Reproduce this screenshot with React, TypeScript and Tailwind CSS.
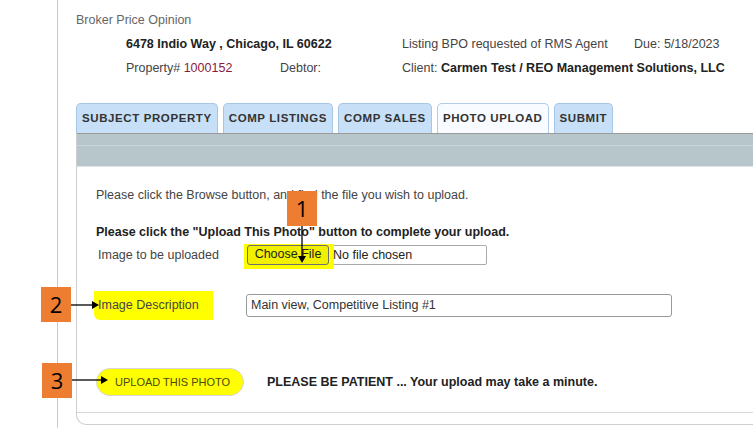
import React from 'react';

const tabs = [
  { label: 'SUBJECT PROPERTY', active: false },
  { label: 'COMP LISTINGS', active: false },
  { label: 'COMP SALES', active: false },
  { label: 'PHOTO UPLOAD', active: true },
  { label: 'SUBMIT', active: false },
];

const Callout: React.FC<{ n: string; className: string }> = ({ n, className }) => (
  <div
    className={`absolute w-[30px] h-[35px] bg-[#ed7d31] flex items-center justify-center text-[22px] text-black ${className}`}
    style={{ fontFamily: '"Open Sans", "Liberation Sans", sans-serif' }}
  >
    {n}
  </div>
);

const App: React.FC = () => {
  return (
    <div
      className="relative w-[753px] h-[428px] overflow-hidden bg-white text-[12.5px] text-[#444]"
      style={{ fontFamily: '"Liberation Sans", Arial, sans-serif' }}
    >
      <div className="ml-[57px] h-[428px] border-l border-[#c8c8c8] pl-[18px] pt-[8px] flex flex-col">
        {/* header */}
        <div className="h-[24px] flex items-center text-[#666]">Broker Price Opinion</div>
        <div className="h-[24px] flex items-center">
          <div className="w-[326px] pl-[50px] font-bold text-[#222]">6478 Indio Way , Chicago, IL 60622</div>
          <div className="w-[232px]">Listing BPO requested of RMS Agent</div>
          <div>Due: 5/18/2023</div>
        </div>
        <div className="h-[24px] flex items-center">
          <div className="w-[204px] pl-[50px]">
            Property# <span className="text-[#8a1a40]">1000152</span>
          </div>
          <div className="w-[122px]">Debtor:</div>
          <div>
            Client: <span className="font-bold text-[#222]">Carmen Test / REO Management Solutions, LLC</span>
          </div>
        </div>

        {/* tabs */}
        <div className="mt-[23px] flex gap-[5px] h-[30px]">
          {tabs.map((t) => (
            <div
              key={t.label}
              className={`h-[30px] px-[5px] flex items-center border border-b-0 rounded-t-[5px] text-[11.5px] font-bold tracking-[0.6px] text-[#333] ${
                t.active ? 'bg-[#f8fbff] border-[#b0cce8]' : 'bg-[#c7e0f7] border-[#a6c6e6]'
              }`}
            >
              {t.label}
            </div>
          ))}
        </div>

        {/* bar + content */}
        <div className="flex-1 border-l border-b border-[#cfcfcf] rounded-bl-[10px] mb-[3px] pb-[11px]">
          <div className="border-t border-[#9a9a9a] bg-[#b6c6cb] h-[33px] flex flex-col">
            <div className="h-[11px]" />
            <div className="h-[1px] bg-[#c9d5d8]" />
          </div>
          <div className="border-t border-[#e2e2e2] border-b border-b-[#d8d8d8] h-[247px] pl-[19px] pt-[21px]">
            <div className="h-[15px] leading-[15px]">
              Please click the Browse button, and find the file you wish to upload.
            </div>
            <div className="mt-[22px] h-[15px] leading-[15px] font-bold text-[#222]">
              Please click the "Upload This Photo" button to complete your upload.
            </div>
            <div className="mt-[3px] h-[24px] flex items-center">
              <div className="w-[151px] pl-[2px]">Image to be uploaded</div>
              <div className="relative w-[240px] h-[20px] border border-[#a9a9a9] rounded-[2px] flex items-center">
                <div className="absolute left-[-4px] top-[-2px] w-[90px] h-[25px] bg-[#ffff00]" />
                <div className="relative h-[20px] -ml-px -mt-px w-[82px] border border-[#6f6f6f] rounded-[3px] bg-[#f0f000] flex items-center justify-center text-[#222]">
                  Choose File
                </div>
                <span className="relative ml-[4px] text-[#222]">No file chosen</span>
              </div>
            </div>
            <div className="mt-[27px] h-[23px] flex items-center">
              <div className="w-[152px] -ml-[2px]">
                <span className="inline-block bg-[#ffff00] pl-[4px] pr-[14px] py-[5px] rounded-bl-[6px] text-[#444]">
                  Image Description
                </span>
              </div>
              <div className="w-[426px] h-[23px] border border-[#999] rounded-[3px] flex items-center px-[4px] text-[#333]">
                Main view, Competitive Listing #1
              </div>
            </div>
            <div className="mt-[51px] h-[28px] flex items-center">
              <div className="w-[148px] h-[28px] border border-[#d6d6d6] rounded-full bg-[#ffff00] flex items-center pl-[18px] text-[11px] text-[#4a4a10]">
                UPLOAD THIS PHOTO
              </div>
              <div className="ml-[23px] font-bold text-[#222]">
                PLEASE BE PATIENT ... Your upload may take a minute.
              </div>
            </div>
          </div>
        </div>
      </div>

      {/* annotations */}
      <Callout n="1" className="left-[287px] top-[191px]" />
      <Callout n="2" className="left-[41px] top-[287px]" />
      <Callout n="3" className="left-[42px] top-[363px]" />
      <svg className="absolute left-0 top-0 pointer-events-none" width="753" height="428">
        <line x1="302" y1="226" x2="302" y2="257" stroke="#000" strokeWidth="1.3" />
        <polygon points="298,256 306,256 302,263" fill="#000" />
        <line x1="71" y1="305" x2="93" y2="305" stroke="#000" strokeWidth="1.3" />
        <polygon points="92,301 92,309 99,305" fill="#000" />
        <line x1="72" y1="380" x2="102" y2="380" stroke="#000" strokeWidth="1.3" />
        <polygon points="101,376 101,384 108,380" fill="#000" />
      </svg>
    </div>
  );
};

export default App;
